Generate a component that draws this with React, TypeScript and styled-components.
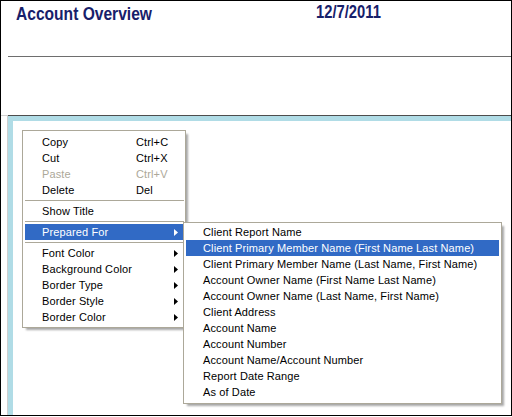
import React from "react";
import styled, { createGlobalStyle } from "styled-components";

const Global = createGlobalStyle`
  html, body { margin: 0; padding: 0; background: #fff; }
  * { box-sizing: border-box; }
`;

const Frame = styled.div`
  position: relative;
  width: 512px;
  height: 416px;
  border: 1px solid #000;
  background: #fff;
  overflow: hidden;
  display: flex;
  flex-direction: column;
  font-family: "Liberation Sans", Arial, sans-serif;
`;

const Header = styled.div`
  height: 55px;
  display: grid;
  grid-template-columns: 300px auto;
  align-items: start;
  padding-left: 15px;
`;

const Heading = styled.div<{ $size: number; $top: number }>`
  font-family: "Liberation Sans", Arial, sans-serif;
  font-weight: bold;
  font-size: ${(p) => p.$size}px;
  color: #17206a;
  padding-top: ${(p) => p.$top}px;
  white-space: nowrap;
  transform: scaleX(0.82);
  transform-origin: left top;
`;

const Rule = styled.div`
  height: 1px;
  margin-left: 7px;
  background: #6e6e6e;
`;

const Blank = styled.div`
  height: 58px;
`;

const SplitRule = styled.div`
  display: flex;
  height: 1px;
`;

const RuleSegment = styled.div<{ $color: string; $w?: number }>`
  background: ${(p) => p.$color};
  ${(p) => (p.$w ? `width: ${p.$w}px;` : "flex: 1;")}
`;

const Panel = styled.div`
  flex: 1;
  margin-left: 6px;
  border-left: 1px solid #cfcfcf;
  display: flex;
`;

const PanelInner = styled.div`
  flex: 1;
  border-left: 5px solid #b0dce6;
  border-top: 5px solid #b0dce6;
  background: #fff;
`;

const Menu = styled.div<{ $left: number; $top: number; $width: number; $pad: string }>`
  position: absolute;
  left: ${(p) => p.$left}px;
  top: ${(p) => p.$top}px;
  width: ${(p) => p.$width}px;
  padding: ${(p) => p.$pad};
  background: #fff;
  border: 1px solid #aca899;
  box-shadow: 3px 3px 2px -1px rgba(0, 0, 0, 0.35);
  font-family: "Liberation Sans", Arial, sans-serif;
  font-size: 11px;
  letter-spacing: 0.12px;
`;

const Item = styled.div<{ $active?: boolean; $disabled?: boolean }>`
  height: 16px;
  line-height: 16px;
  display: flex;
  align-items: center;
  padding-left: 17px;
  padding-right: 6px;
  white-space: nowrap;
  background: ${(p) => (p.$active ? "#316ac5" : "transparent")};
  color: ${(p) => (p.$active ? "#fff" : p.$disabled ? "#aca899" : "#000")};
`;

const Label = styled.span`
  flex: 0 0 94px;
`;

const Shortcut = styled.span`
  flex: 1;
`;

const Arrow = styled.svg`
  margin-left: auto;
  display: block;
`;

const Separator = styled.div`
  height: 1px;
  margin: 2px 0;
  background: #aca899;
`;

type Entry =
  | { sep: true }
  | { label: string; shortcut?: string; sub?: boolean; active?: boolean; disabled?: boolean };

const mainItems: Entry[] = [
  { label: "Copy", shortcut: "Ctrl+C" },
  { label: "Cut", shortcut: "Ctrl+X" },
  { label: "Paste", shortcut: "Ctrl+V", disabled: true },
  { label: "Delete", shortcut: "Del" },
  { sep: true },
  { label: "Show Title" },
  { sep: true },
  { label: "Prepared For", sub: true, active: true },
  { sep: true },
  { label: "Font Color", sub: true },
  { label: "Background Color", sub: true },
  { label: "Border Type", sub: true },
  { label: "Border Style", sub: true },
  { label: "Border Color", sub: true },
];

const subItems = [
  "Client Report Name",
  "Client Primary Member Name (First Name Last Name)",
  "Client Primary Member Name (Last Name, First Name)",
  "Account Owner Name (First Name Last Name)",
  "Account Owner Name (Last Name, First Name)",
  "Client Address",
  "Account Name",
  "Account Number",
  "Account Name/Account Number",
  "Report Date Range",
  "As of Date",
];

const SubArrow = ({ color }: { color: string }) => (
  <Arrow width="4" height="7" viewBox="0 0 4 7">
    <path d="M0 0 L4 3.5 L0 7 Z" fill={color} />
  </Arrow>
);

export default function App() {
  return (
    <>
      <Global />
      <Frame>
        <Header>
          <Heading $size={19} $top={2}>Account Overview</Heading>
          <Heading $size={18} $top={1}>12/7/2011</Heading>
        </Header>
        <Rule />
        <Blank />
        <SplitRule>
          <RuleSegment $color="#d2d2d2" $w={7} />
          <RuleSegment $color="#4d4d4d" />
        </SplitRule>
        <Panel>
          <PanelInner />
        </Panel>

        <Menu $left={21} $top={129} $width={164} $pad="3px 1px 2px 2px">
          {mainItems.map((it, i) =>
            "sep" in it ? (
              <Separator key={i} />
            ) : (
              <Item key={i} $active={it.active} $disabled={it.disabled}>
                <Label>{it.label}</Label>
                {it.shortcut && <Shortcut>{it.shortcut}</Shortcut>}
                {it.sub && <SubArrow color={it.active ? "#fff" : "#000"} />}
              </Item>
            )
          )}
        </Menu>

        <Menu $left={182} $top={221} $width={319} $pad="1px 2px 3px 2px">
          {subItems.map((s, i) => (
            <Item key={s} $active={i === 1}>
              {s}
            </Item>
          ))}
        </Menu>
      </Frame>
    </>
  );
}
